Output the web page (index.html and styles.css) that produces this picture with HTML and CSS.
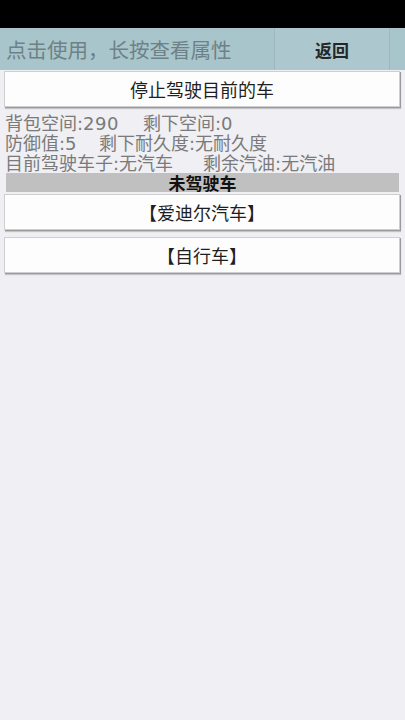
FILE: index.html
```html
<!DOCTYPE html>
<html lang="zh">
<head>
<meta charset="utf-8">
<link rel="stylesheet" href="styles.css">
</head>
<body>
<div class="statusbar"></div>
<div class="header">
  <div class="title">点击使用，长按查看属性</div>
  <div class="back">返回</div>
  <div class="edge"></div>
</div>
<div class="content">
  <div class="btn btn-first">停止驾驶目前的车</div>
  <div class="stats">
    <div class="line"><span class="col1">背包空间:<span class="num">290</span></span><span>剩下空间:<span class="num">0</span></span></div>
    <div class="line"><span class="col1 narrow">防御值:<span class="num">5</span></span><span>剩下耐久度:无耐久度</span></div>
    <div class="line"><span class="col1 wide">目前驾驶车子:无汽车</span><span>剩余汽油:无汽油</span></div>
  </div>
  <div class="section">未驾驶车</div>
  <div class="btn">【爱迪尔汽车】</div>
  <div class="btn">【自行车】</div>
</div>
</body>
</html>
```
FILE: styles.css
```css
html, body {
  margin: 0;
  padding: 0;
}
body {
  width: 405px;
  height: 720px;
  background: #efeff4;
  font-family: "Noto Sans CJK SC", "Noto Sans", sans-serif;
  overflow: hidden;
}
.statusbar {
  height: 28px;
  background: #000;
}
.header {
  height: 42px;
  display: flex;
  align-items: stretch;
  background: #a9c5cc;
}
.title {
  width: 275px;
  padding-left: 6px;
  box-sizing: border-box;
  display: flex;
  align-items: center;
  color: #6d8186;
  font-size: 20.5px;
  border-right: 1px solid #9db8bf;
  white-space: nowrap;
}
.back {
  width: 114px;
  display: flex;
  align-items: center;
  justify-content: center;
  color: #262626;
  font-size: 17px;
  font-weight: bold;
  background: #acc8ce;
  border-right: 1px solid #9db8bf;
}
.edge {
  flex: 1;
}
.content {
  padding: 1px 0 0 4px;
}
.btn {
  width: 396px;
  height: 36px;
  box-sizing: border-box;
  background: #fdfdfd;
  border: 1px solid #cfcfcf;
  box-shadow: 1px 1px 0 #9a9a9a, 1px 2px 1px rgba(0, 0, 0, 0.18);
  display: flex;
  align-items: center;
  justify-content: center;
  font-size: 18px;
  color: #1f1f1f;
  margin-bottom: 7px;
}
.btn-first {
  margin-bottom: 7px;
}
.stats {
  color: #7a7a7a;
  font-family: "DejaVu Sans", "Noto Sans CJK SC", sans-serif;
  font-size: 18px;
  line-height: 20px;
}
.line {
  white-space: nowrap;
  margin-left: 1px;
}
.num {
  letter-spacing: 0.5px;
}
.col1 {
  margin-right: 24px;
}
.col1.narrow {
  margin-right: 22px;
}
.col1.wide {
  margin-right: 30px;
}
.section {
  width: 393px;
  height: 19px;
  margin: -1px 0 2px 2px;
  background: #c0c0c0;
  color: #111;
  font-weight: bold;
  font-size: 17px;
  line-height: 19px;
  display: flex;
  align-items: center;
  justify-content: center;
}
```
